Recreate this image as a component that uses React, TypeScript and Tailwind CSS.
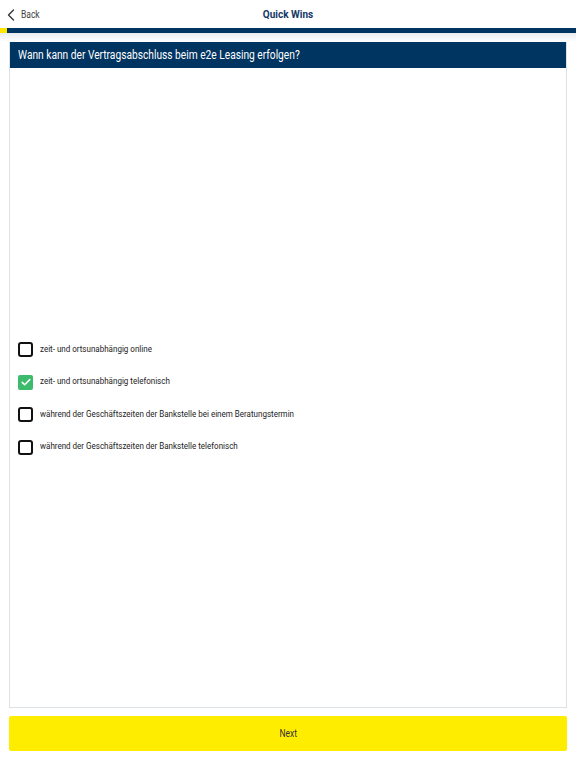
import { useState } from "react";

const options = [
  "zeit- und ortsunabhängig online",
  "zeit- und ortsunabhängig telefonisch",
  "während der Geschäftszeiten der Bankstelle bei einem Beratungstermin",
  "während der Geschäftszeiten der Bankstelle telefonisch",
];

function Checkbox({ checked }: { checked: boolean }) {
  if (checked) {
    return (
      <span className="flex h-[15px] w-[15px] shrink-0 items-center justify-center rounded-[2px] bg-[#3dbb6c]">
        <svg viewBox="0 0 16 16" className="h-[12px] w-[12px]" fill="none">
          <path d="M3 8.5l3.2 3.2L13 4.8" stroke="white" strokeWidth="2" strokeLinecap="round" strokeLinejoin="round" />
        </svg>
      </span>
    );
  }
  return <span className="h-[15px] w-[15px] shrink-0 rounded-[3px] border-[2.5px] border-[#111]" />;
}

export default function App() {
  const [selected, setSelected] = useState<number[]>([1]);

  const toggle = (i: number) =>
    setSelected((s) => (s.includes(i) ? s.filter((x) => x !== i) : [...s, i]));

  return (
    <div className="flex h-[768px] w-[576px] flex-col bg-white font-['Roboto',sans-serif]">
      {/* top bar */}
      <div className="relative flex h-[28px] items-center justify-center">
        <button className="absolute left-[6px] top-[7px] flex items-center gap-[5px] text-[10px] text-[#444]">
          <svg viewBox="0 0 12 16" className="h-[14px] w-[10px]" fill="none">
            <path d="M9 2L3 8l6 6" stroke="#333" strokeWidth="1.6" strokeLinecap="round" strokeLinejoin="round" />
          </svg>
          <span className="inline-block origin-left scale-x-[0.85]">Back</span>
        </button>
        <span className="text-[10px] font-bold text-[#123a66]">Quick Wins</span>
      </div>

      {/* progress */}
      <div className="flex h-[5px] bg-[#003461]">
        <div className="w-[7px] bg-[#ffe500]" />
      </div>
      <div className="h-[9px] bg-gradient-to-b from-[#e9ecef] to-white" />

      {/* question card */}
      <div className="mx-[9px] flex flex-1 flex-col border border-[#dde2e6] border-t-0">
        <div className="flex h-[26px] items-center bg-[#003461] px-[8px] text-[12px] text-white">
          <span className="inline-block origin-left scale-x-[0.85] whitespace-nowrap">
            Wann kann der Vertragsabschluss beim e2e Leasing erfolgen?
          </span>
        </div>
        <div className="flex flex-1 flex-col pl-[8px] pt-[274px]">
          <div className="flex flex-col gap-[17.5px]">
            {options.map((label, i) => (
              <label key={i} onClick={() => toggle(i)} className="flex h-[15px] cursor-pointer items-center gap-[7px] text-[9px] text-[#222]">
                <Checkbox checked={selected.includes(i)} />
                <span className="inline-block origin-left scale-x-[0.89] whitespace-nowrap">{label}</span>
              </label>
            ))}
          </div>
        </div>
      </div>

      <div className="px-[9px] pt-[8px] pb-[17px]">
        <button className="flex h-[35px] w-full items-center justify-center rounded-[2px] bg-[#ffed00] text-[10px] text-[#333]">
          <span className="inline-block scale-x-[0.85]">Next</span>
        </button>
      </div>
    </div>
  );
}
